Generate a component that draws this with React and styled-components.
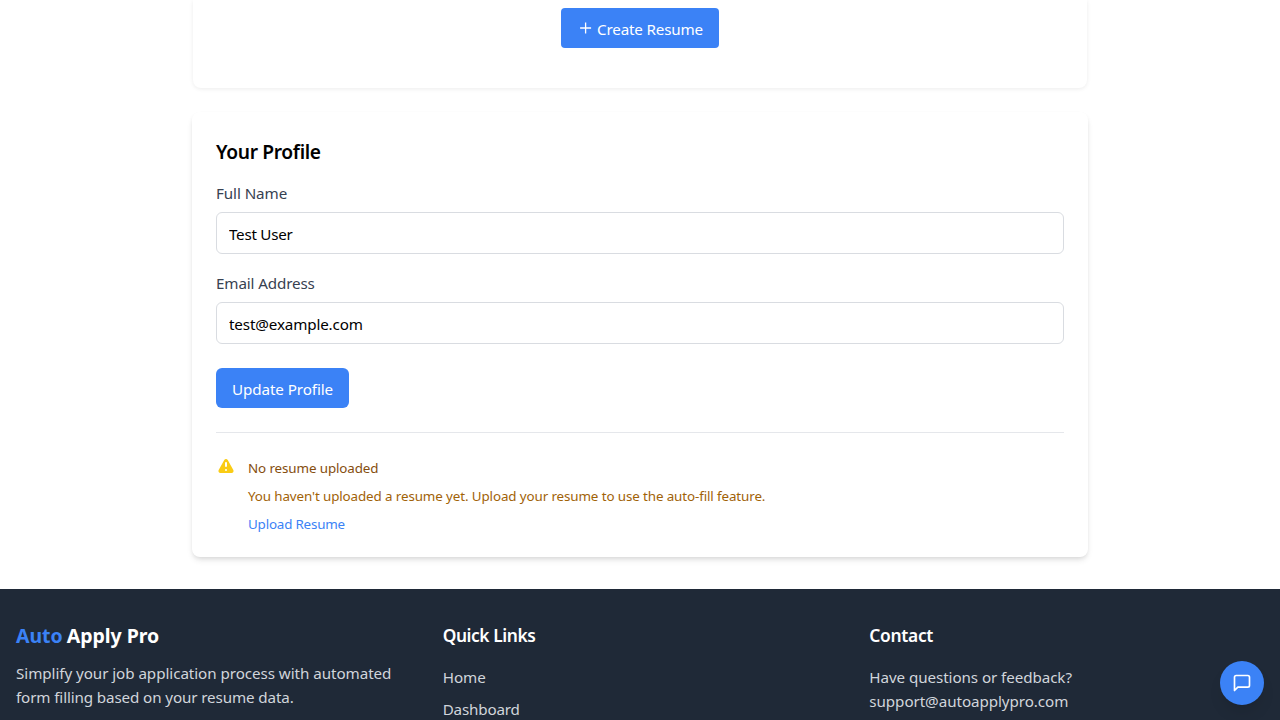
import React from 'react';
import styled, { createGlobalStyle } from 'styled-components';

const Global = createGlobalStyle`
  *, *::before, *::after { box-sizing: border-box; }
  body { margin: 0; background: #fff; color: #000; font-family: "Segoe UI", "Noto Sans", "Open Sans", sans-serif; font-size: 15.2px; line-height: 24px; overflow: hidden; }
  h2, h3, p, ul { margin: 0; padding: 0; }
  ul { list-style: none; }
  a { color: inherit; text-decoration: none; }
  button, input { font: inherit; }
`;

const Page = styled.div`
  height: 720px;
  overflow: hidden;
`;

const T = styled.span`
  letter-spacing: ${(p) => p.$ls || 0}px;
  white-space: nowrap;
`;

const Main = styled.main`
  width: 896px;
  margin: 0 auto 32px;
  display: flex;
  flex-direction: column;
  gap: 24px;
`;

const ResumePanel = styled.section`
  display: flex;
  justify-content: center;
  height: 88px;
  margin: 0 1px;
  padding-top: 8px;
  border-radius: 0 0 8px 8px;
  box-shadow: 0 1px 4px rgba(0, 0, 0, 0.08);
`;

const Button = styled.button`
  display: flex;
  align-items: center;
  width: ${(p) => p.$width}px;
  height: 40px;
  padding: 2px 0 0 16px;
  border: 0;
  border-radius: ${(p) => p.$radius}px;
  background: #3b82f6;
  color: #fff;

  svg { margin: -3px 4px 0 0; flex: none; }
`;

const Card = styled.section`
  height: 445px;
  padding: 24px;
  border-radius: 8px;
  background: #fff;
  box-shadow: 0 4px 6px -1px rgba(0, 0, 0, 0.1), 0 2px 4px -1px rgba(0, 0, 0, 0.08);
`;

const Title = styled.h2`
  margin-bottom: 16px;
  padding-top: 2px;
  height: 28px;
  font-size: 19.2px;
  line-height: 28px;
  font-weight: 600;
`;

const Field = styled.label`
  display: block;
  margin-bottom: ${(p) => p.$gap}px;
  color: #374151;
`;

const FieldName = styled.div`
  height: 24px;
  padding-top: 1px;
  margin-bottom: 8px;
`;

const Input = styled.input`
  display: block;
  width: 100%;
  height: 42px;
  padding: 2px 12px 0;
  border: 1px solid #d9dce1;
  border-radius: 6px;
  background: #fff;
  color: #000;
  letter-spacing: ${(p) => p.$ls || 0}px;
  outline: 0;
`;

const Notice = styled.div`
  display: flex;
  gap: 12px;
  margin-top: 24px;
  padding-top: 24px;
  border-top: 1px solid #e5e7eb;
  font-size: 13.4px;
  line-height: 20px;
`;

const NoticeBody = styled.div`
  display: flex;
  flex-direction: column;
  gap: 8px;
  padding-top: 1px;
`;

const NoticeLine = styled.p`
  color: ${(p) => p.$color};
`;

const Footer = styled.footer`
  display: grid;
  grid-template-columns: repeat(3, 1fr);
  gap: 32px;
  height: 300px;
  padding: 32px 16px;
  background: #1f2937;
  color: #d1d5db;
`;

const Brand = styled.h3`
  height: 28px;
  margin-bottom: 12px;
  padding-top: 1px;
  font-size: 19.5px;
  line-height: 28px;
  font-weight: 700;
  color: #fff;
`;

const Accent = styled.span`
  color: #3b82f6;
  margin-right: -1px;
`;

const FooterTitle = styled.h3`
  height: 28px;
  margin-bottom: 16px;
  font-size: 17.4px;
  line-height: 28px;
  font-weight: 600;
  color: #fff;
`;

const Links = styled.ul`
  display: flex;
  flex-direction: column;
  gap: 8px;
`;

const Chat = styled.button`
  position: fixed;
  right: 16px;
  bottom: 15px;
  display: grid;
  place-items: center;
  width: 44px;
  height: 44px;
  padding: 0;
  border: 0;
  border-radius: 50%;
  background: #3b82f6;
  color: #fff;
  box-shadow: 0 10px 15px -3px rgba(0, 0, 0, 0.1), 0 4px 6px -4px rgba(0, 0, 0, 0.1);

  svg { margin-top: -1px; }
`;

const PlusIcon = () => (
  <svg width="16" height="16" viewBox="0 0 16 16" fill="none" stroke="currentColor" strokeWidth="1.3">
    <path d="M8.6 2.5v11M3.1 8h11" />
  </svg>
);

const WarningIcon = () => (
  <svg width="20" height="20" viewBox="0 0 20 20" fill="#facc15">
    <path fillRule="evenodd" clipRule="evenodd" d="M8.257 3.099c.765-1.36 2.722-1.36 3.486 0l5.58 9.92c.75 1.334-.213 2.98-1.742 2.98H4.42c-1.53 0-2.493-1.646-1.743-2.98l5.58-9.92zM11 13a1 1 0 11-2 0 1 1 0 012 0zm-1-8a1 1 0 00-1 1v3a1 1 0 002 0V6a1 1 0 00-1-1z" />
  </svg>
);

const ChatIcon = () => (
  <svg width="20" height="20" viewBox="0 0 24 24" fill="none" stroke="currentColor" strokeWidth="2" strokeLinecap="round" strokeLinejoin="round">
    <path d="M21 15a2 2 0 0 1-2 2H7l-4 4V5a2 2 0 0 1 2-2h14a2 2 0 0 1 2 2z" />
  </svg>
);

export default function App() {
  return (
    <Page>
      <Global />
      <Main>
        <ResumePanel>
          <Button $width={158} $radius={4}><PlusIcon /><T $ls={-0.16}>Create Resume</T></Button>
        </ResumePanel>
        <Card>
          <Title><T $ls={-0.34}>Your Profile</T></Title>
          <Field $gap={16}>
            <FieldName><T $ls={-0.08}>Full Name</T></FieldName>
            <Input $ls={-0.27} defaultValue="Test User" />
          </Field>
          <Field $gap={24}>
            <FieldName><T $ls={-0.13}>Email Address</T></FieldName>
            <Input $ls={-0.14} defaultValue="test@example.com" />
          </Field>
          <Button $width={133} $radius={6}><T $ls={-0.09}>Update Profile</T></Button>
          <Notice>
            <WarningIcon />
            <NoticeBody>
              <NoticeLine $color="#854d0e"><T $ls={-0.11}>No resume uploaded</T></NoticeLine>
              <NoticeLine $color="#a16207"><T $ls={-0.115}>You haven't uploaded a resume yet. Upload your resume to use the auto-fill feature.</T></NoticeLine>
              <NoticeLine $color="#3b82f6"><a href="#upload"><T $ls={-0.19}>Upload Resume</T></a></NoticeLine>
            </NoticeBody>
          </Notice>
        </Card>
      </Main>
      <Footer>
        <div>
          <Brand><T $ls={-0.03}><Accent>Auto</Accent> Apply Pro</T></Brand>
          <p><T $ls={-0.06}>Simplify your job application process with automated</T><br /><T $ls={-0.12}>form filling based on your resume data.</T></p>
        </div>
        <div>
          <FooterTitle><T $ls={-0.43}>Quick Links</T></FooterTitle>
          <Links>
            <li><a href="#home"><T>Home</T></a></li>
            <li><a href="#dashboard"><T $ls={-0.17}>Dashboard</T></a></li>
          </Links>
        </div>
        <div>
          <FooterTitle><T $ls={-0.32}>Contact</T></FooterTitle>
          <p><T $ls={-0.08}>Have questions or feedback?</T><br /><T $ls={-0.07}>support@autoapplypro.com</T></p>
        </div>
      </Footer>
      <Chat aria-label="Chat"><ChatIcon /></Chat>
    </Page>
  );
}
